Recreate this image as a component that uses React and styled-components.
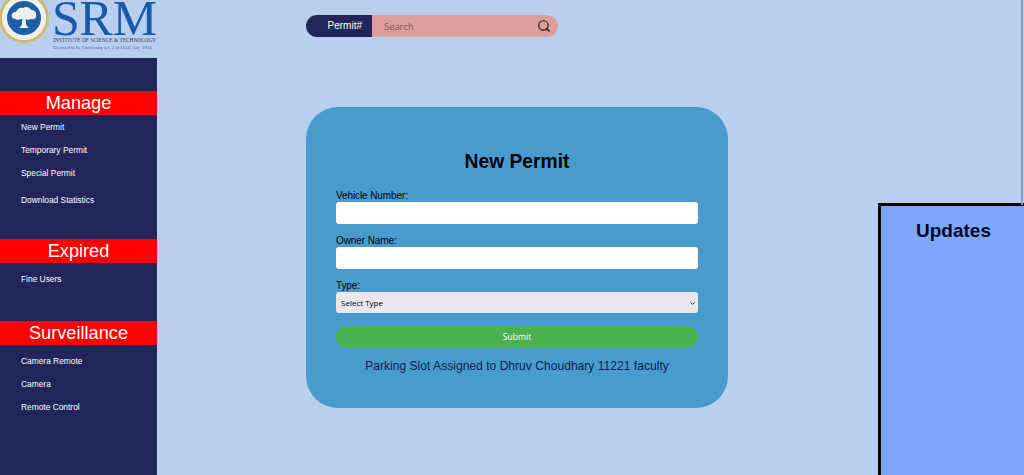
import React from 'react';
import styled, { createGlobalStyle } from 'styled-components';
import { ChevronDown, Search } from 'lucide-react';

const GlobalStyle = createGlobalStyle`
  html, body {
    margin: 0;
    height: 475px;
    overflow: hidden;
    background: #b9cff0;
    font-family: 'Liberation Sans', Arial, sans-serif;
  }
`;

const Page = styled.div`
  display: flex;
  height: 475px;
  position: relative;
  overflow: hidden;
`;

const Sidebar = styled.aside`
  width: 157px;
  flex-shrink: 0;
  display: flex;
  flex-direction: column;
`;

const LogoRow = styled.div`
  height: 58px;
  display: flex;
  align-items: flex-start;
  overflow: hidden;
`;

const SealSvg = styled.svg`
  width: 50px;
  height: 50px;
  flex-shrink: 0;
  margin: -7px 0 0 -1px;
`;

const LogoText = styled.div`
  display: flex;
  flex-direction: column;
  margin-left: 3px;
`;

const Srm = styled.div`
  font-family: 'Liberation Serif', serif;
  font-size: 50px;
  line-height: 36px;
  height: 37px;
  color: #1a5aa6;
  letter-spacing: -0.2px;
  white-space: nowrap;
`;

const LogoLine = styled.div`
  font-family: 'Liberation Serif', serif;
  font-size: ${(p) => p.$size}px;
  line-height: 7px;
  margin-left: 1px;
  color: ${(p) => p.$color};
  white-space: nowrap;
`;

const Nav = styled.nav`
  flex: 1;
  background: #21255a;
  padding-top: 33px;
  display: flex;
  flex-direction: column;
`;

const NavGroup = styled.div`
  height: ${(p) => p.$height}px;
`;

const NavTitle = styled.div`
  background: #ff0000;
  color: #fff;
  height: 24px;
  line-height: 24px;
  text-align: center;
  font-size: 18.2px;
  margin-bottom: ${(p) => p.$gap}px;
`;

const NavLink = styled.a`
  display: block;
  color: #fff;
  font-size: 8.4px;
  height: ${(p) => p.$height || 23}px;
  line-height: 24px;
  padding-left: 21px;
`;

const Middle = styled.main`
  width: 422px;
  margin-left: 149px;
  flex-shrink: 0;
  padding-top: 15px;
`;

const SearchBar = styled.div`
  width: 252px;
  height: 22px;
  display: flex;
  border-radius: 11px;
  overflow: hidden;
  margin-bottom: 70px;
`;

const SearchLabel = styled.div`
  width: 66px;
  background: #21255a;
  color: #fff;
  font-size: 10px;
  line-height: 21px;
  text-align: right;
  padding-right: 10px;
  box-sizing: border-box;
`;

const SearchField = styled.div`
  flex: 1;
  background: #dc9e9c;
  display: flex;
  align-items: center;
  justify-content: space-between;
  padding: 0 7px 0 12px;
  font-family: 'Open Sans', sans-serif;
  font-size: 9.4px;
  color: #7a5a60;
`;

const Card = styled.section`
  height: 301px;
  box-sizing: border-box;
  background: #4a9bcd;
  border-radius: 32px;
  padding: 43px 30px 0;
`;

const CardTitle = styled.h1`
  margin: 0 0 17px;
  font-size: 19.3px;
  line-height: 23px;
  font-weight: 700;
  text-align: center;
  color: #000;
`;

const Field = styled.div`
  margin-bottom: 11px;
`;

const Label = styled.label`
  display: block;
  font-size: 10px;
  letter-spacing: -0.1px;
  line-height: 12px;
  color: #000;
`;

const TextInput = styled.input`
  display: block;
  width: 100%;
  height: 22px;
  box-sizing: border-box;
  border: none;
  border-radius: 3px;
  background: #fff;
`;

const SelectWrap = styled.div`
  position: relative;
  height: 21px;
`;

const Select = styled.select`
  display: block;
  width: 100%;
  height: 21px;
  box-sizing: border-box;
  border: none;
  border-radius: 3px;
  background: #e9e7ec;
  color: #000;
  font-family: 'Open Sans', sans-serif;
  font-size: 8px;
  padding-left: 5px;
  appearance: none;
`;

const SelectArrow = styled.span`
  position: absolute;
  top: 8px;
  right: 2px;
  display: flex;
  pointer-events: none;
`;

const Submit = styled.button`
  display: block;
  width: 100%;
  height: 22px;
  margin-top: 13px;
  border: none;
  border-radius: 11px;
  background: #4caf50;
  color: #fff;
  font-family: 'Open Sans', sans-serif;
  font-size: 8.6px;
`;

const Status = styled.p`
  margin: 11px 0 0;
  font-size: 12.1px;
  line-height: 14px;
  text-align: center;
  color: #0a2050;
`;

const Updates = styled.aside`
  margin-left: 150px;
  margin-top: 203px;
  flex: 1;
  box-sizing: border-box;
  border-top: 3px solid #000;
  border-left: 3px solid #000;
  background: #7da7fb;
  padding: 13px 0 0 2px;
  text-align: center;
`;

const UpdatesTitle = styled.h2`
  margin: 0;
  font-size: 19px;
  line-height: 23px;
  font-weight: 700;
  color: #000822;
`;

const ScrollThumb = styled.div`
  position: absolute;
  top: 0;
  right: 1px;
  width: 2px;
  height: 205px;
  background: #8fa0bc;
`;

function Seal() {
  return (
    <SealSvg viewBox="0 0 50 50">
      <circle cx="25" cy="25" r="25" fill="#dcb84e" />
      <circle cx="25" cy="25" r="22.6" fill="#eef0ee" />
      <circle cx="25" cy="25" r="22.6" fill="none" stroke="#8c94a8" strokeWidth="0.5" />
      <circle cx="25" cy="25" r="17" fill="#1f5fa8" />
      <path d="M13 24c-1-3 1-5 4-5 1-3 4-5 7-4 3-2 7-1 8 2 3 0 6 2 5 5 1 3-2 5-5 4-2 1-4 1-6 0h-4c-2 1-4 1-6 0-1 0-3-1-3-2z" fill="#eef0ee" />
      <path d="M23.400 26h3.200l.7 6 2.500 3h-9.600l2.500-3z" fill="#eef0ee" />
    </SealSvg>
  );
}

export default function App() {
  return (
    <Page>
      <GlobalStyle />
      <Sidebar>
        <LogoRow>
          <Seal />
          <LogoText>
            <Srm>SRM</Srm>
            <LogoLine $size={5.4} $color="#3a3f55">INSTITUTE OF SCIENCE &amp; TECHNOLOGY</LogoLine>
            <LogoLine $size={5} $color="#4d5b78">Deemed to be University u/s 3 of UGC Act, 1956</LogoLine>
          </LogoText>
        </LogoRow>
        <Nav>
          <NavGroup $height={148}>
            <NavTitle $gap={0}>Manage</NavTitle>
            <NavLink>New Permit</NavLink>
            <NavLink>Temporary Permit</NavLink>
            <NavLink $height={27}>Special Permit</NavLink>
            <NavLink>Download Statistics</NavLink>
          </NavGroup>
          <NavGroup $height={82}>
            <NavTitle $gap={4}>Expired</NavTitle>
            <NavLink>Fine Users</NavLink>
          </NavGroup>
          <NavGroup>
            <NavTitle $gap={4}>Surveillance</NavTitle>
            <NavLink>Camera Remote</NavLink>
            <NavLink>Camera</NavLink>
            <NavLink>Remote Control</NavLink>
          </NavGroup>
        </Nav>
      </Sidebar>
      <Middle>
        <SearchBar>
          <SearchLabel>Permit#</SearchLabel>
          <SearchField>
            Search
            <Search size={14} color="#1a1a1a" strokeWidth={2} />
          </SearchField>
        </SearchBar>
        <Card>
          <CardTitle>New Permit</CardTitle>
          <Field>
            <Label>Vehicle Number:</Label>
            <TextInput />
          </Field>
          <Field>
            <Label>Owner Name:</Label>
            <TextInput />
          </Field>
          <Field>
            <Label>Type:</Label>
            <SelectWrap>
              <Select defaultValue="">
                <option value="">Select Type</option>
              </Select>
              <SelectArrow>
                <ChevronDown size={7} color="#111" strokeWidth={3} />
              </SelectArrow>
            </SelectWrap>
          </Field>
          <Submit>Submit</Submit>
          <Status>Parking Slot Assigned to Dhruv Choudhary 11221 faculty</Status>
        </Card>
      </Middle>
      <Updates>
        <UpdatesTitle>Updates</UpdatesTitle>
      </Updates>
      <ScrollThumb />
    </Page>
  );
}
